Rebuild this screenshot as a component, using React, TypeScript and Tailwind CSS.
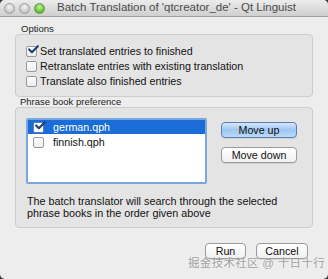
import { Check } from "lucide-react";

const font = { fontFamily: '"Liberation Sans", "Noto Sans CJK SC", sans-serif' };

function TrafficLight({ green }: { green?: boolean }) {
  return (
    <span
      className={
        green
          ? "h-[11px] w-[11px] rounded-full border border-[#5a9b3a] bg-[radial-gradient(circle_at_50%_35%,#c8f0a8,#6cc23d_60%,#4f9a2a)]"
          : "h-[11px] w-[11px] rounded-full border border-[#9c9c9c] bg-[radial-gradient(circle_at_50%_35%,#f4f4f4,#cdcdcd_60%,#b3b3b3)]"
      }
    />
  );
}

function MacCheck({ checked, onBlue }: { checked?: boolean; onBlue?: boolean }) {
  return (
    <span
      className={`relative flex h-[11px] w-[11px] shrink-0 items-center justify-center rounded-[2px] border ${
        onBlue ? "border-[#5b7fae] bg-white" : "border-[#9a9a9a] bg-gradient-to-b from-white to-[#ececec]"
      }`}
    >
      {checked && (
        <Check
          className="absolute -top-[4px] left-[0px] h-[13px] w-[13px] text-[#1d3f78]"
          strokeWidth={4}
        />
      )}
    </span>
  );
}

function CheckRow({ label, checked }: { label: string; checked?: boolean }) {
  return (
    <div className="flex h-[15px] items-center gap-[3px]">
      <MacCheck checked={checked} />
      <span className="text-[10.7px] text-[#111]">{label}</span>
    </div>
  );
}

function Button({ label, primary, className }: { label: string; primary?: boolean; className: string }) {
  return (
    <div
      className={`flex h-[16px] items-center justify-center rounded-[4px] border text-[10.7px] leading-none text-[#111] shadow-[0_1px_0_rgba(0,0,0,0.08)] ${
        primary
          ? "border-[#5a7fb3] bg-gradient-to-b from-[#d5e6fb] via-[#9ec6f2] to-[#bcd9f8]"
          : "border-[#9a9a9a] bg-gradient-to-b from-white to-[#f0f0f0]"
      } ${className}`}
    >
      {label}
    </div>
  );
}

export default function App() {
  return (
    <div className="h-[279px] w-[328px] bg-[#3a3a3a]" style={font}>
      <div className="relative flex h-[279px] w-[328px] flex-col overflow-hidden rounded-[5px] bg-[#ededed]">
        {/* title bar */}
        <div className="flex h-[17px] shrink-0 items-center border-b border-[#9e9e9e] bg-gradient-to-b from-[#ececec] to-[#cfcfcf] pl-[4px]">
          <div className="flex gap-[4px]">
            <TrafficLight />
            <TrafficLight />
            <TrafficLight green />
          </div>
          <span className="ml-[12px] text-[11.5px] leading-none text-[#4a4a4a]">
            Batch Translation of 'qtcreator_de' - Qt Linguist
          </span>
        </div>

        <div className="flex flex-col px-[15px]">
          <div className="mt-[6px] pl-[6px] text-[9.5px] leading-[12px] text-[#222]">Options</div>
          <div className="mt-[-1px] flex h-[63px] flex-col rounded-[4px] border border-[#cdcdcd] bg-[#e4e4e4] px-[10px] pt-[9px]">
            <CheckRow label="Set translated entries to finished" checked />
            <CheckRow label="Retranslate entries with existing translation" />
            <CheckRow label="Translate also finished entries" />
          </div>

          <div className="mt-[-1px] pl-[5px] text-[9.5px] leading-[12px] text-[#222]">Phrase book preference</div>
          <div className="mt-[-1px] flex h-[121px] flex-col rounded-[4px] border border-[#cdcdcd] bg-[#e4e4e4] px-[10px] pt-[10px]">
            <div className="flex">
              <div className="h-[66px] w-[181px] rounded-[2px] border-2 border-[#7aa7e0] bg-white">
                <div className="flex h-[14px] items-center gap-[9px] bg-[#1a6cd6] pl-[5px]">
                  <MacCheck checked onBlue />
                  <span className="text-[10.7px] text-white">german.qph</span>
                </div>
                <div className="flex h-[16px] items-center gap-[9px] pl-[5px]">
                  <MacCheck />
                  <span className="text-[10.7px] text-[#111]">finnish.qph</span>
                </div>
              </div>
              <div className="ml-[14px] mt-[4px] flex flex-col gap-[9px]">
                <Button label="Move up" primary className="w-[76px]" />
                <Button label="Move down" className="w-[76px]" />
              </div>
            </div>
            <p className="mt-[11px] pl-[1px] text-[10.8px] leading-[12px] text-[#111]">
              The batch translator will search through the selected
              <br />
              phrase books in the order given above
            </p>
          </div>

          <div className="mt-[15px] flex justify-end gap-[10px] pr-[5px]">
            <Button label="Run" className="w-[41px]" />
            <Button label="Cancel" className="w-[52px]" />
          </div>
        </div>

        <div className="absolute right-[3px] top-[258px] text-[11.5px] leading-none tracking-[0.3px] text-[#8f8f8f] opacity-80 [text-shadow:0_0_2px_#fff]">
          掘金技术社区 @ 十日十行
        </div>
      </div>
    </div>
  );
}
